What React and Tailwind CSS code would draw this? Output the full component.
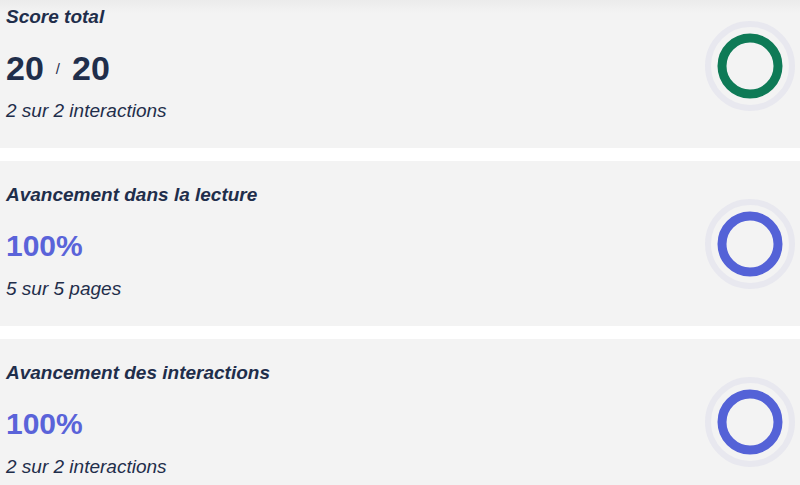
import React from "react";

const cards = [
  {
    title: "Score total",
    value: null,
    sub: "2 sur 2 interactions",
    ring: "#0e7a56",
  },
  {
    title: "Avancement dans la lecture",
    value: "100%",
    sub: "5 sur 5 pages",
    ring: "#5462d7",
  },
  {
    title: "Avancement des interactions",
    value: "100%",
    sub: "2 sur 2 interactions",
    ring: "#5462d7",
  },
];

function Ring({ color }) {
  return (
    <svg width="90" height="90" viewBox="0 0 90 90" className="shrink-0">
      <circle cx="45" cy="45" r="42" fill="none" stroke="#e8e8ef" strokeWidth="6" />
      <circle cx="45" cy="45" r="28" fill="none" stroke={color} strokeWidth="9" />
    </svg>
  );
}

export default function App() {
  return (
    <div className="w-[800px] h-[485px] overflow-hidden bg-white font-['Liberation_Sans',Arial,sans-serif] text-[#1f2e4b]">
      <div className="-mt-[17px] flex flex-col gap-[13px]">
        {cards.map((c, i) => (
          <div
            key={i}
            className={`h-[165px] shrink-0 flex items-start justify-between pl-[6px] pr-[5px] ${
              i === 0
                ? "bg-[linear-gradient(to_bottom,#f3f3f3_0px,#f3f3f3_16px,#ebebeb_17px,#f3f3f3_30px)]"
                : "bg-[#f3f3f3]"
            }`}
          >
            <div className="flex flex-col pt-[23px]">
              <div className="text-[19px] leading-[22px] font-bold italic">{c.title}</div>
              {c.value ? (
                <div className="mt-[22px] text-[30px] leading-[36px] font-bold text-[#5a63d9]">
                  {c.value}
                </div>
              ) : (
                <div className="mt-[22px] text-[34px] leading-[36px] font-bold flex items-baseline">
                  <span>20</span>
                  <span className="ml-[12px] mr-[12px] text-[15px] leading-none font-normal relative -top-[6px]">/</span>
                  <span>20</span>
                </div>
              )}
              <div className="mt-[14px] text-[19px] leading-[22px] italic">{c.sub}</div>
            </div>
            <div className="self-center">
              <Ring color={c.ring} />
            </div>
          </div>
        ))}
      </div>
    </div>
  );
}
